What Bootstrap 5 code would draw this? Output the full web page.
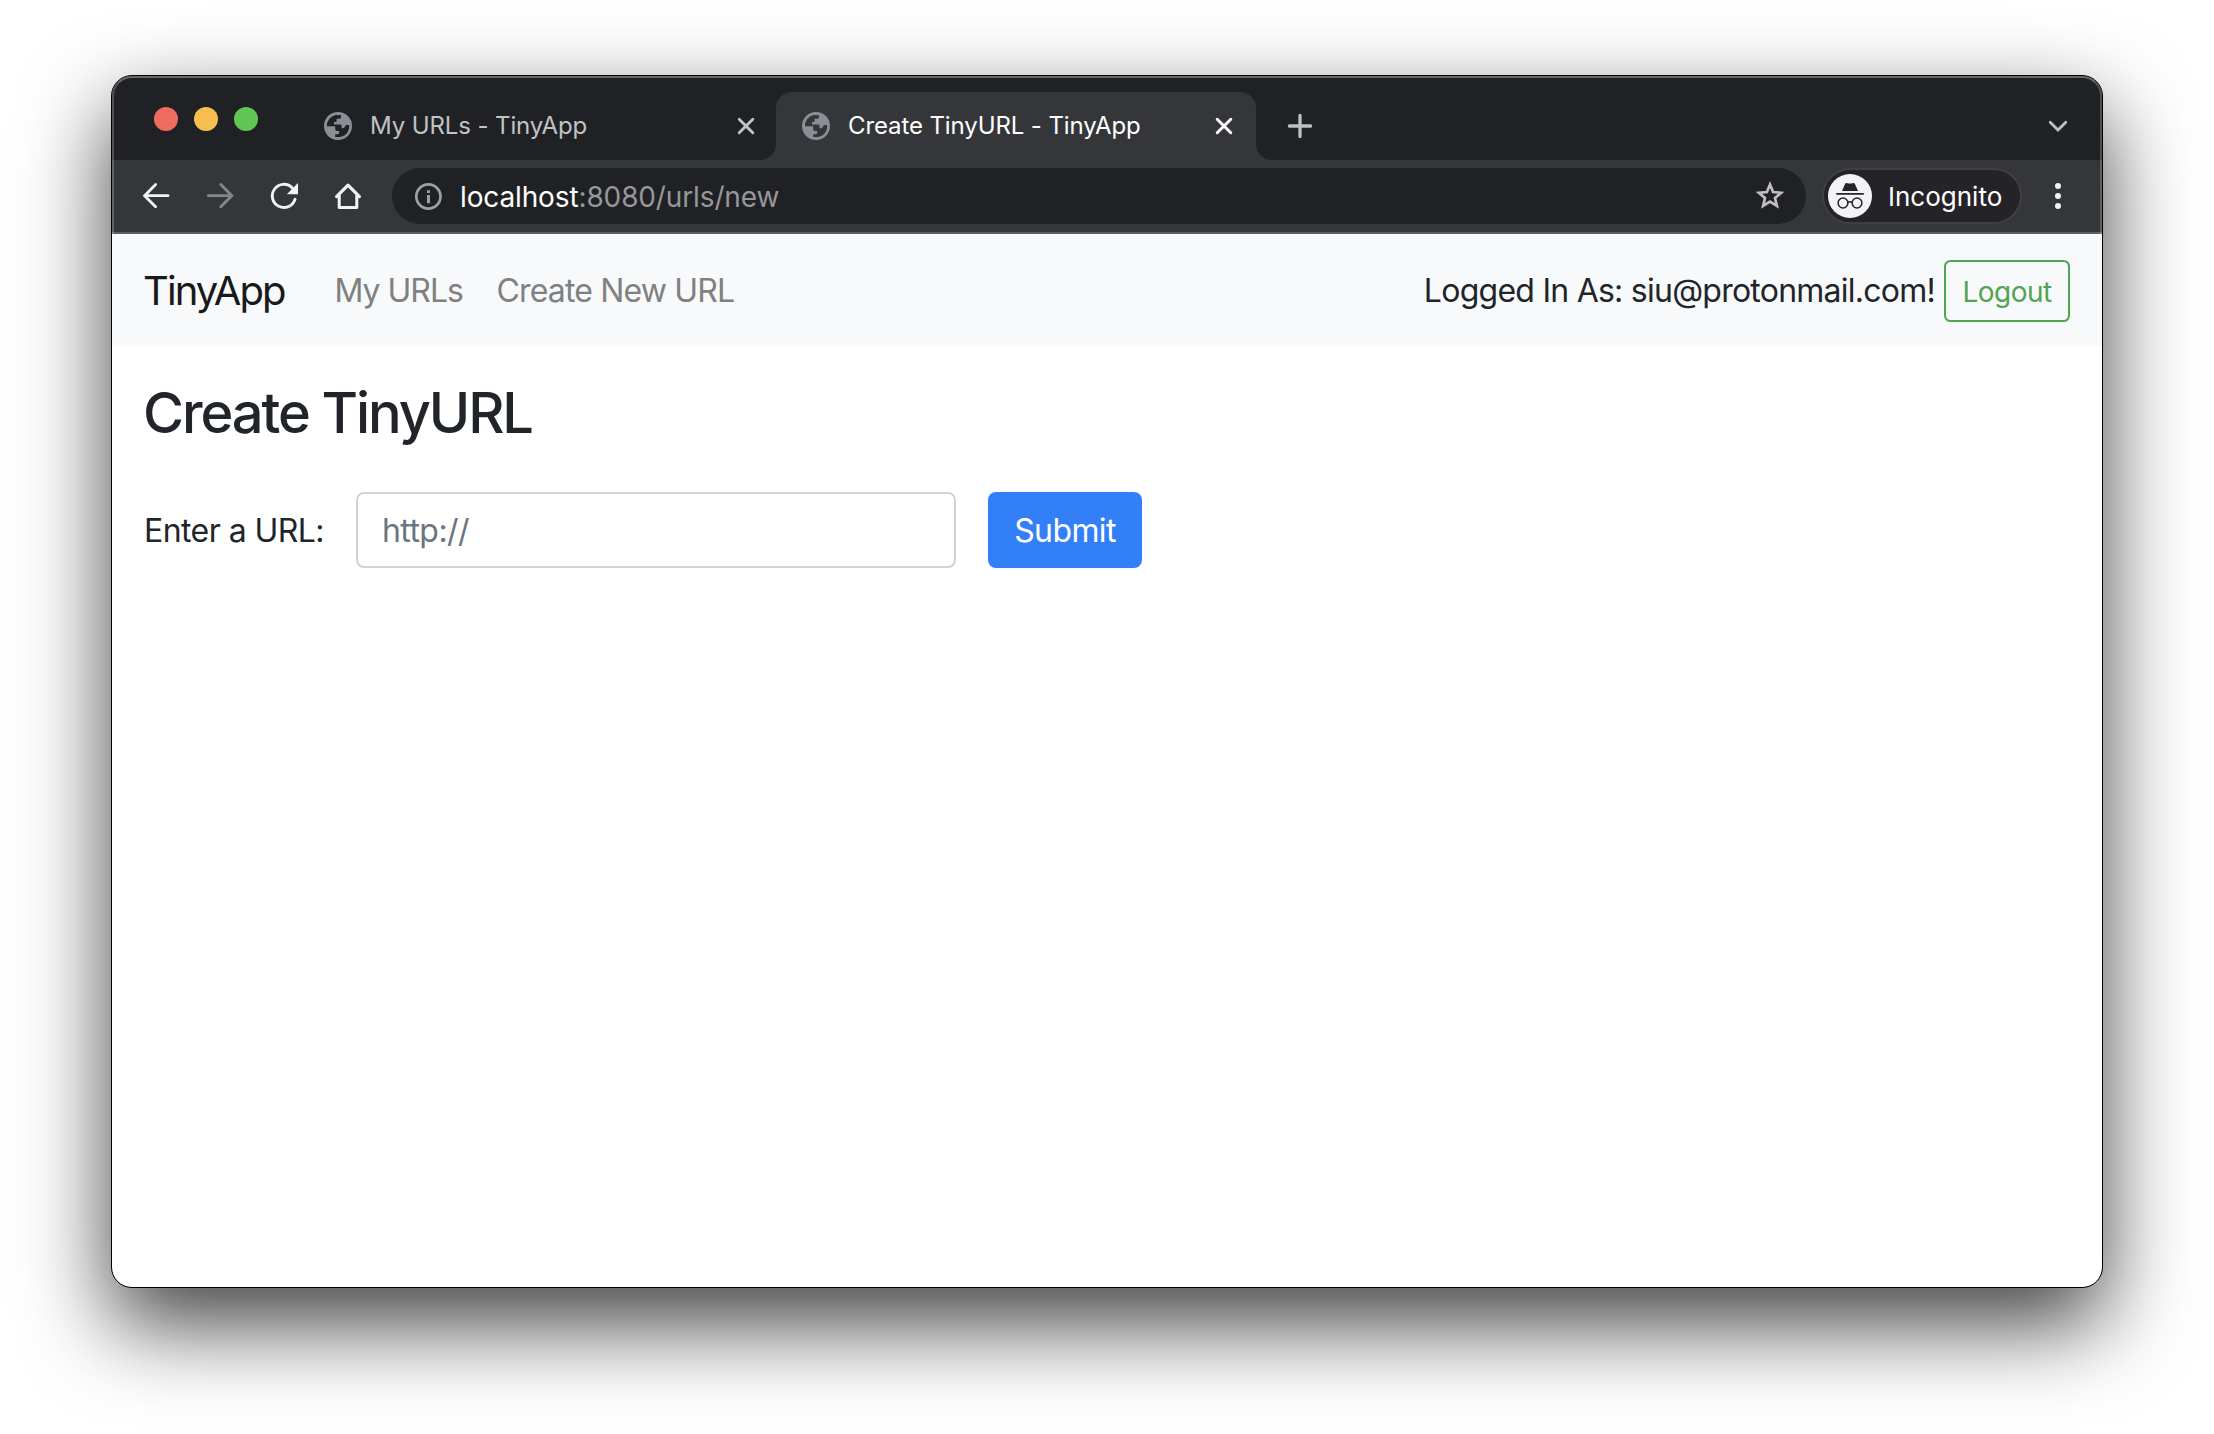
<!DOCTYPE html>
<html lang="en">
<head>
<meta charset="utf-8">
<title>Create TinyURL - TinyApp</title>
<link href="https://cdn.jsdelivr.net/npm/bootstrap@5.3.0/dist/css/bootstrap.min.css" rel="stylesheet">
<style>
  body { font-family: Inter, "Liberation Sans", sans-serif; background: #fff; color: #212529; overflow: hidden; height: 1434px; font-kerning: normal; }
  svg { display: block; flex: none; }
  .stage { padding: 75px 111px 0; }
  .window-frame { width: 1992px; height: 1213px; border: 1px solid #000; border-radius: 21px; background: #fff; box-shadow: 0 36px 88px rgba(0,0,0,.75); background-clip: padding-box; }
  .window-body { border-radius: 20px; overflow: hidden; height: 1211px; }

  /* browser chrome */
  .chrome { height: 158px; background: #35363a; }
  .chrome::after { content: ""; position: absolute; inset: 0; border: 2px solid rgba(255,255,255,.22); border-top-color: rgba(255,255,255,.32); border-bottom: 0; border-radius: 20px 20px 0 0; pointer-events: none; }
  .tab-strip { height: 84px; background: #202124; padding-left: 42px; padding-right: 34px; }
  .lights { gap: 16px; padding-top: 31px; width: 144px; }
  .light { width: 24px; height: 24px; border-radius: 50%; }
  .tab { height: 68px; padding-left: 26px; font-size: 24px; line-height: 68px; white-space: nowrap; letter-spacing: -.11px; }
  .tab-title { padding-left: 18px; }
  .tab-idle { width: 478px; padding-right: 21px; color: #c0c2c6; }
  .tab-on { width: 480px; padding-right: 23px; color: #fff; background: #35363a; border-radius: 16px 16px 0 0; }
  .tab-on::before, .tab-on::after { content: ""; position: absolute; bottom: 0; width: 16px; height: 16px; }
  .tab-on::before { left: -16px; background: radial-gradient(circle at 0 0, transparent 15.5px, #35363a 16.5px); }
  .tab-on::after { right: -16px; background: radial-gradient(circle at 100% 0, transparent 15.5px, #35363a 16.5px); }
  .tab-tail { height: 68px; }
  .plus { margin-left: 31px; }
  .toolbar { height: 74px; padding: 8px 41px 10px 30px; }
  .toolbar .nav-ico { margin-right: 36px; }
  .omnibox { width: 1414px; height: 56px; border-radius: 28px; background: #202124; padding: 0 20px 0 23px; margin-left: -6px; }
  .address { font-size: 28px; line-height: 56px; letter-spacing: -.13px; color: #fff; padding: 1px 0 0 17px; }
  .address span { color: #96979a; }
  .incog { width: 200px; height: 56px; margin-left: 16px; border: 2px solid #3f4044; border-radius: 28px; background: #242328; padding-left: 4px; color: #fff; font-size: 26px; line-height: 52px; }
  .incog-label { padding: 2px 0 0 16px; }
  .chrome-line { height: 2px; background: #5f6064; position: absolute; left: 0; right: 0; bottom: 0; }

  /* page, drawn at twice its CSS size */
  .app-bar { height: 112px; padding: 0 32px; background: #f8f9fa; font-size: 32px; }
  .app-bar .navbar-brand { font-size: 40px; letter-spacing: -1.9px; color: #18191a; margin: 0 0 0 -1px; padding: 1px 0 0; width: 191.5px; white-space: nowrap; }
  .app-bar .navbar-nav .nav-link { color: #7f8081; padding: 2px 0 0; white-space: nowrap; }
  .link-a { letter-spacing: -1px; width: 162px; }
  .link-b { letter-spacing: -.84px; }
  .user-note { letter-spacing: -.75px; white-space: nowrap; padding: 2px 9px 0 0; }
  .btn-logout { width: 126px; height: 62px; padding: 1px 0 0; font-size: 28px; line-height: 58px; letter-spacing: -.53px; border: 2px solid #54a351; border-radius: 6.4px; color: #54a351; margin-top: 2px; }
  .page-main { padding: 34px 32px 0; }
  .page-title { font-size: 56px; line-height: 67px; font-weight: 500; letter-spacing: -2.1px; margin: 0 0 45px -1px; }
  .url-form { height: 76px; font-size: 32px; }
  .url-form label { letter-spacing: -.56px; width: 212px; padding-top: 2px; }
  .url-form .form-control { width: 600px; height: 76px; font-size: 32px; padding: 1px 24px 0; border: 2px solid #ced4da; border-radius: 8px; letter-spacing: -.57px; }
  .url-form .form-control::placeholder { color: #6c757d; }
  .btn-send { margin-left: 32px; width: 154px; height: 76px; border: 0; border-radius: 8px; background: #337ff7; color: #fff; font-size: 32px; padding: 2px 0 0; letter-spacing: -.62px; }
</style>
<script src="https://cdn.jsdelivr.net/npm/bootstrap@5.3.0/dist/js/bootstrap.bundle.min.js"></script>
</head>
<body>
<svg width="0" height="0" class="position-absolute">
  <symbol id="globe" viewBox="0 0 28 28">
    <path fill="#8a8f96" fill-rule="evenodd" d="M14 0a14 14 0 1 0 0 28a14 14 0 0 0 0-28zM11.5 3.1L17 3.2V5.2Q17 6.8 15.3 6.8H12.6V9Q12.6 10 11.6 10H10V12.4H16.2Q17.6 12.4 17.6 13.8V16.3H18.9Q20.6 16.3 21 14.6Q21.2 13 22.8 13H25.1Q25.6 19 21.6 22.4Q18 25.5 11.2 25V22.2H13.6Q15.2 22.2 15.2 20.6V18.9H12.8Q11.2 18.9 11.2 17.2V14.3H3Q2.6 10.5 5.2 7Q7.6 3.9 11.5 3.1z"/>
  </symbol>
  <symbol id="cross" viewBox="0 0 18 18">
    <path d="M2.2 2.2L15.8 15.8M15.8 2.2L2.2 15.8" stroke="currentColor" stroke-width="2.9" stroke-linecap="round"/>
  </symbol>
</svg>
<div class="stage">
 <div class="window-frame">
  <div class="window-body">
   <header class="chrome position-relative">
    <div class="tab-strip d-flex">
      <div class="lights d-flex">
        <span class="light" style="background:#ed6b5f"></span>
        <span class="light" style="background:#f5be4f"></span>
        <span class="light" style="background:#62c655"></span>
      </div>
      <div class="tab tab-idle d-flex align-items-center align-self-end">
        <svg width="28" height="28"><use href="#globe"/></svg>
        <span class="tab-title flex-grow-1">My URLs - TinyApp</span>
        <svg width="18" height="18"><use href="#cross"/></svg>
      </div>
      <div class="tab tab-on d-flex align-items-center align-self-end position-relative">
        <svg width="28" height="28"><use href="#globe"/></svg>
        <span class="tab-title flex-grow-1">Create TinyURL - TinyApp</span>
        <svg width="18" height="18"><use href="#cross"/></svg>
      </div>
      <div class="tab-tail d-flex align-items-center align-self-end flex-grow-1 justify-content-between">
        <svg class="plus" width="26" height="26" viewBox="0 0 26 26"><path d="M13 2.4V23.6M2.4 13H23.6" stroke="#bdc1c6" stroke-width="3.3" stroke-linecap="round"/></svg>
        <svg width="20" height="14" viewBox="0 0 20 14"><path d="M2.2 3.2L10 11L17.8 3.2" fill="none" stroke="#bdc1c6" stroke-width="2.8" stroke-linecap="round"/></svg>
      </div>
    </div>
    <div class="toolbar d-flex align-items-center">
      <svg class="nav-ico" width="28" height="28" viewBox="0 0 28 28" fill="none" stroke="#f1f3f4" stroke-width="2.8" stroke-linecap="round"><path d="M26 13.7H3M13.6 2.6L2.6 13.7L13.6 24.8"/></svg>
      <svg class="nav-ico" width="28" height="28" viewBox="0 0 28 28" fill="none" stroke="#868789" stroke-width="2.8" stroke-linecap="round"><path d="M2.4 13.7H25.4M14.8 2.6L25.8 13.7L14.8 24.8"/></svg>
      <svg class="nav-ico" width="28" height="28" viewBox="0 0 28 28"><path d="M25 17.3A11.6 11.6 0 1 1 22.3 5.9" fill="none" stroke="#f1f3f4" stroke-width="2.9" stroke-linecap="round"/><path d="M28 1V12.2H16.8z" fill="#f1f3f4"/></svg>
      <svg class="nav-ico" width="28" height="28" viewBox="0 0 28 28" fill="none" stroke="#f1f3f4" stroke-width="3" stroke-linejoin="round" stroke-linecap="round"><path d="M5.2 13.4V25.5H22.8V13.4"/><path d="M2.6 14.6L14 3.2L25.4 14.6" stroke-width="3.2"/></svg>
      <div class="omnibox d-flex align-items-center">
        <svg width="28" height="28" viewBox="0 0 28 28"><circle cx="13.4" cy="14.5" r="12.1" fill="none" stroke="#9aa0a6" stroke-width="2.7"/><path d="M12 13H15V21.2H12zM12 8.2H15V11H12z" fill="#9aa0a6"/></svg>
        <div class="address flex-grow-1">localhost<span>:8080/urls/new</span></div>
        <svg width="32" height="32" viewBox="0 0 32 32"><path d="M16 4.6L19.1 12.1L27.1 12.8L21 18L22.9 25.9L16 21.7L9.1 25.9L11 18L4.9 12.8L12.9 12.1z" fill="none" stroke="#bfbfbf" stroke-width="2.7"/></svg>
      </div>
      <div class="incog d-flex align-items-center">
        <svg width="44" height="44" viewBox="0 0 44 44"><circle cx="22" cy="22" r="22" fill="#f1f3f4"/><path d="M14 17L17.2 9.8Q17.6 8.7 18.8 9Q22 10 25.2 9Q26.4 8.7 26.8 9.8L30 17z" fill="#242328"/><path d="M8.2 19.9H35.8" stroke="#242328" stroke-width="1.8"/><g fill="none" stroke="#242328" stroke-width="1.5"><circle cx="15" cy="29" r="4.9"/><circle cx="29" cy="29" r="4.9"/><path d="M19.8 28.4Q22 26.9 24.2 28.4"/></g></svg>
        <span class="incog-label">Incognito</span>
      </div>
      <svg class="ms-auto" width="6" height="28" viewBox="0 0 6 28" fill="#f1f3f4"><circle cx="3" cy="4" r="3"/><circle cx="3" cy="14" r="3"/><circle cx="3" cy="24" r="3"/></svg>
    </div>
    <div class="chrome-line"></div>
   </header>

   <nav class="app-bar navbar navbar-expand flex-nowrap justify-content-start">
     <a class="navbar-brand" href="#">TinyApp</a>
     <div class="navbar-nav me-auto">
       <a class="nav-link link-a" href="#">My URLs</a>
       <a class="nav-link link-b" href="#">Create New URL</a>
     </div>
     <span class="user-note">Logged In As: siu@protonmail.com!</span>
     <button type="button" class="btn btn-logout">Logout</button>
   </nav>
   <main class="page-main">
     <h3 class="page-title">Create TinyURL</h3>
     <form class="url-form d-flex align-items-center">
       <label for="longURL">Enter a URL:</label>
       <input class="form-control" id="longURL" type="text" placeholder="http://">
       <button type="button" class="btn btn-send">Submit</button>
     </form>
   </main>
  </div>
 </div>
</div>
</body>
</html>
